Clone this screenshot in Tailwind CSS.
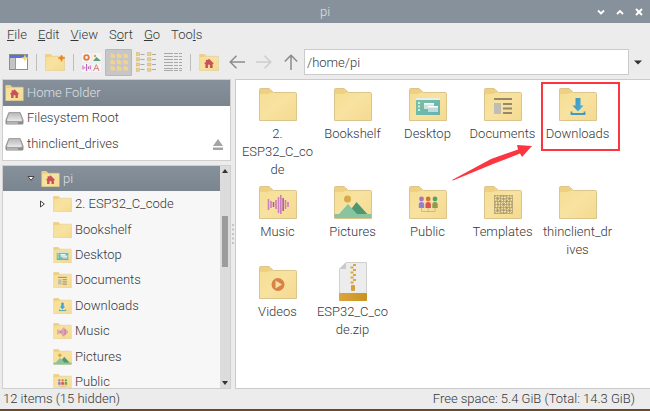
<!DOCTYPE html>
<html lang="en">
<head>
<meta charset="utf-8">
<title>pi</title>
<script src="https://cdn.jsdelivr.net/npm/@tailwindcss/browser@4"></script>
</head>
<body class="flex h-screen flex-col overflow-hidden border-b-2 border-[#6b4a2c] bg-[#ececec] text-[13px] leading-[18px] font-light text-[#35383a]" style="font-family: Roboto, 'Liberation Sans', sans-serif">

<svg class="absolute size-0" aria-hidden="true">
  <defs>
    <linearGradient id="fold" x1="0" y1="0" x2="1" y2="1"><stop offset="0" stop-color="#f5dd92"/><stop offset=".5" stop-color="#f8e2a0"/><stop offset="1" stop-color="#f4da90"/></linearGradient>
    <linearGradient id="blue" x1="0" y1="0" x2="1" y2="1"><stop offset="0" stop-color="#3f97b8"/><stop offset="1" stop-color="#49b0e0"/></linearGradient>
    <linearGradient id="desk" x1="0" y1="0" x2="1" y2="1"><stop offset="0" stop-color="#7cc0a0"/><stop offset="1" stop-color="#62b3b4"/></linearGradient>
    <linearGradient id="zipb"><stop offset="0" stop-color="#dba53f"/><stop offset="1" stop-color="#c8931f"/></linearGradient>
    <linearGradient id="drv" x1="0" y1="0" x2="0" y2="1"><stop offset="0" stop-color="#b5b5b5"/><stop offset="1" stop-color="#ececec"/></linearGradient>
  </defs>
  <symbol id="folder" viewBox="0 0 38 33">
    <path d="M.5 32.500V1.500Q.5.500 1.500.500H10L14.500 4.500H36.500Q37.500 4.500 37.500 5.500V32.500Z" fill="url(#fold)" stroke="#dcc58c"/>
    <path d="M1 1H10L14 5H11L8.500 6H1Z" fill="#efd083"/>
  </symbol>
  <symbol id="home" viewBox="0 0 38 33"><use href="#folder"/><path d="M19 9L28 18V19H26V27H21V21H17V27H12V19H10V18L13 15V11H16V12Z" fill="#cb5158"/></symbol>
  <symbol id="desktop" viewBox="0 0 38 33"><use href="#folder"/>
    <rect x="7" y="10" width="24" height="17" fill="url(#desk)"/><rect x="7" y="10" width="24" height="2" fill="#e9eeea"/>
    <path d="M9 14h2v2H9zM9 17.500h2v2H9zM9 21h2v2H9z" fill="#d7eee3"/>
    <rect x="15" y="15" width="10" height="6" fill="#cfe3df"/><rect x="15" y="15" width="10" height="1.500" fill="#fff"/>
    <rect x="19" y="18" width="10" height="6" fill="#c0dad8"/><rect x="19" y="18" width="10" height="1.500" fill="#fff"/>
  </symbol>
  <symbol id="documents" viewBox="0 0 38 33"><use href="#folder"/>
    <rect x="10" y="15" width="7" height="11" fill="#c0bdb6"/>
    <path d="M10 11h18M19 16h9M19 20.500h9M19 25h9" stroke="#96876a" stroke-width="2"/>
  </symbol>
  <symbol id="downloads" viewBox="0 0 38 33"><use href="#folder"/>
    <path d="M16.500 10H21.500V17.500H24.500L19 23.500L13.500 17.500H16.500Z" fill="url(#blue)"/>
    <path d="M12.500 23.500V26H25.500V23.500" fill="none" stroke="#3f9cc0" stroke-width="1.800"/>
  </symbol>
  <symbol id="music" viewBox="0 0 38 33"><use href="#folder"/>
    <path d="M9.500 13v11M12 15v7M14.500 16v5M17 14v9M19.500 11v16M21.800 9v19M24.200 12v13M26.500 14v9M29 16v5" stroke="#c87fbb" stroke-width="1.600"/>
    <path d="M14.500 16v5M24.200 12v13" stroke="#b4559d" stroke-width="1.200"/>
  </symbol>
  <symbol id="pictures" viewBox="0 0 38 33"><use href="#folder"/>
    <circle cx="13.500" cy="13" r="3.500" fill="#d9a948"/>
    <path d="M12 30L22.500 16L36 31Z" fill="#4f9772"/><path d="M.5 28H5L14 18L23 28H37.500V32H.5Z" fill="#89c4a0"/>
  </symbol>
  <symbol id="public" viewBox="0 0 38 33"><use href="#folder"/>
    <path d="M12.500 22V25.500H26V22M19.200 22v3.500" fill="none" stroke="#cbb98a"/>
    <circle cx="12.500" cy="13" r="2.400" fill="#b070bd"/><path d="M9.800 22V18q0-2 2.700-2t2.700 2v4z" fill="#8f83cf"/>
    <circle cx="19.200" cy="13" r="2.400" fill="#d4752f"/><path d="M16.500 22V18q0-2 2.700-2t2.700 2v4z" fill="#d8544d"/>
    <circle cx="26" cy="13" r="2.400" fill="#55a177"/><path d="M23.300 22V18q0-2 2.700-2t2.700 2v4z" fill="#8f9b4a"/>
  </symbol>
  <symbol id="templates" viewBox="0 0 38 33"><use href="#folder"/>
    <g fill="none" stroke="#9a8d68" stroke-width=".6"><rect x="10.500" y="9.500" width="18" height="18"/>
    <circle cx="19.500" cy="18.500" r="8.500"/><circle cx="19.500" cy="18.500" r="5"/>
    <path d="M10.500 9.500l18 18M28.500 9.500l-18 18M10.500 12.500h18M10.500 15.500h18M10.500 18.500h18M10.500 21.500h18M10.500 24.500h18M13.500 9.500v18M16.500 9.500v18M19.500 9.500v18M22.500 9.500v18M25.500 9.500v18"/></g>
  </symbol>
  <symbol id="videos" viewBox="0 0 38 33"><use href="#folder"/><circle cx="19" cy="18.500" r="6.500" fill="#d98245"/><path d="M16.500 14.500V22.500L23 18.500Z" fill="#f8dfa5"/></symbol>
  <symbol id="zip" viewBox="0 0 28 39">
    <path d="M.5 38V7L7 .5H27.500V38Z" fill="#ececec" stroke="#d0d0d0"/><path d="M.5 7L7 .5V7Z" fill="#c9c9c9"/>
    <rect y="31" width="28" height="8" rx="1" fill="url(#zipb)"/>
    <path d="M14 3h3M11.500 5.500h3M14 8h3M11.500 10.500h3M14 13h3M11.500 15.500h3M14 18h3M11.500 20.500h3" stroke="#dca640" stroke-width="2"/>
    <rect x="12" y="23" width="4" height="6" rx="1" fill="#d6a037"/>
  </symbol>
  <symbol id="drive" viewBox="0 0 19 14">
    <path d="M3.500 1.500H15.500L18.500 9V12Q18.500 13.500 17 13.500H2Q.5 13.500 .5 12V9Z" fill="#8d8d8d"/>
    <path d="M4 1.500H15L17.500 9Q17.500 10.500 16 10.500H3Q1.500 10.500 1.500 9Z" fill="url(#drv)" stroke="#969696" stroke-width=".7"/>
    <path d="M2 12h11" stroke="#d8d8d8"/>
  </symbol>
</svg>

<header class="relative flex h-[23px] shrink-0 items-center justify-center bg-[#87919b] text-[#dfe3e6]">
  <h1>pi</h1>
  <div class="absolute right-[2px] flex">
    <button aria-label="Minimize" class="flex w-[19px] justify-center"><svg class="size-[8px]" viewBox="0 0 8 8"><path d="M1 2.500L4 5.500L7 2.500" fill="none" stroke="#fff" stroke-width="1.800"/></svg></button>
    <button aria-label="Maximize" class="flex w-[19px] justify-center"><svg class="size-[8px]" viewBox="0 0 8 8"><path d="M1 6L4 3L7 6" fill="none" stroke="#fff" stroke-width="1.800"/></svg></button>
    <button aria-label="Close" class="flex w-[19px] justify-center"><svg class="size-[8px]" viewBox="0 0 8 8"><path d="M1 1L7 7M7 1L1 7" fill="none" stroke="#fff" stroke-width="2"/></svg></button>
  </div>
</header>

<nav aria-label="Menu" class="flex h-[24px] shrink-0 items-center gap-[11px] pl-[7px]">
  <button><u>F</u>ile</button><button><u>E</u>dit</button><button><u>V</u>iew</button><button>S<u>o</u>rt</button><button><u>G</u>o</button><button>Too<u>l</u>s</button>
</nav>

<div role="toolbar" class="flex h-[32px] shrink-0 items-center pb-[2px] pl-[5px]">
  <button aria-label="New window" class="flex h-[27px] w-[27px] items-center justify-center">
    <svg class="h-[18px] w-[20px]" viewBox="0 0 20 18"><rect x=".5" y="1.500" width="18" height="15" fill="#fff" stroke="#8c8c8c"/><rect x="1" y="2" width="17" height="3" fill="#5673d8"/><rect x="1" y="5" width="5" height="11" fill="#c4c4c4"/><path d="M6.500 5v11" stroke="#999"/><path d="M16 1L17 4L20 5L17 6L16 9L15 6L12 5L15 4Z" fill="#f8d568"/></svg>
  </button>
  <span class="mx-[4px] h-[17px] w-[1px] bg-[#bdbdbd]"></span>
  <button aria-label="New folder" class="flex h-[27px] w-[28px] items-center justify-center">
    <svg class="h-[17px] w-[20px]" viewBox="0 0 20 17"><use href="#folder" width="20" height="17"/><path d="M16.500 1L17.500 3.200L20 4L17.500 4.800L16.500 7.500L15.500 4.800L13 4L15.500 3.200Z" fill="#ee7d1d" stroke="#ee7d1d" stroke-width=".6"/></svg>
  </button>
  <span class="mx-[4px] h-[17px] w-[1px] bg-[#bdbdbd]"></span>
  <button aria-label="Thumbnails" class="flex h-[27px] w-[27px] items-center justify-center">
    <svg class="size-[19px]" viewBox="0 0 19 19"><path d="M0 0h9v9H0zM10.500 0h8.500v9h-8.500zM0 10.500h9V19H0zM10.500 10.500H19V19h-8.500z" fill="#f7f4f4"/><circle cx="4.500" cy="4.500" r="2.300" fill="none" stroke="#de7c42" stroke-width="1.800"/><circle cx="13" cy="3" r="1.200" fill="#dca640"/><path d="M11 8l3.500-4L19 8z" fill="#55a07b"/><path d="M1 12.500v4M2.800 14v1.500M4.600 11v7M6.400 13.500v2.500M8.200 12.500v4" stroke="#b45cba"/><path d="M11.500 18L14.300 11.500L17 18M12.500 15.500h4" fill="none" stroke="#dd8585"/></svg>
  </button>
  <button aria-label="Icons" aria-pressed="true" class="flex h-[27px] w-[27px] items-center justify-center rounded-[1px] border border-[#b8b8b8] bg-[#c6c6c6]">
    <svg class="h-[18px] w-[18px]" viewBox="0 0 18 18"><path d="M.5 .5h2l1 1h1.500v3.500H.5zM7 .5h2l1 1h1.500v3.500H7zM13.500 .5h2l1 1h1.500v3.500h-4.500zM.5 6.800h2l1 1h1.500v3.500H.5zM7 6.800h2l1 1h1.500v3.500H7zM13.500 6.800h2l1 1h1.500v3.500h-4.500zM.5 13h2l1 1h1.500v3.500H.5zM7 13h2l1 1h1.500v3.500H7zM13.500 13h2l1 1h1.500v3.500h-4.500z" fill="#f0d48c"/></svg>
  </button>
  <button aria-label="Compact" class="flex h-[27px] w-[27px] items-center justify-center">
    <svg class="size-[20px]" viewBox="0 0 20 20"><path d="M0 0.500h3.500v3H0zM0 5.800h3.500v3H0zM0 11h3.500v3H0zM0 16.300h3.500v3H0zM11.500 0.500H15v3h-3.500zM11.500 5.800H15v3h-3.500zM11.500 11H15v3h-3.500zM11.500 16.300H15v3h-3.500z" fill="#ecd08a" stroke="#cdb06b" stroke-width=".5"/><path d="M4.500 2.500h4M4.500 7.500h4M4.500 12.500h4M4.500 17.500h4M16 2.500h4M16 7.500h4M16 12.500h4M16 17.500h4" stroke="#a9a9a9"/></svg>
  </button>
  <button aria-label="Detailed list" class="flex h-[27px] w-[27px] items-center justify-center">
    <svg class="h-[18px] w-[18px]" viewBox="0 0 18 18"><path d="M0 .5h18M0 3.500h18M0 6.500h18M0 9.500h18M0 12.500h18M0 15.500h18" stroke="#a8a8a8" stroke-dasharray="9 1 4 1 3 0"/><path d="M0 17.500h18" stroke="#a8a8a8" stroke-dasharray="9 1 4 1 3 0"/></svg>
  </button>
  <span class="mx-[4px] h-[17px] w-[1px] bg-[#bdbdbd]"></span>
  <button aria-label="Home" class="flex h-[27px] w-[28px] items-center justify-center"><svg class="h-[17px] w-[20px]"><use href="#home"/></svg></button>
  <button aria-label="Back" class="flex h-[27px] w-[27px] items-center justify-center"><svg class="h-[14px] w-[16px]" viewBox="0 0 16 14" fill="none" stroke="#8c8c8c" stroke-width="1.500"><path d="M7.500.8L1.200 7L7.500 13.200M1 7H16"/></svg></button>
  <button aria-label="Forward" class="flex h-[27px] w-[27px] items-center justify-center"><svg class="h-[14px] w-[16px]" viewBox="0 0 16 14" fill="none" stroke="#cdcdcd" stroke-width="1.500"><path d="M8.500.8L14.800 7L8.500 13.200M15 7H0"/></svg></button>
  <button aria-label="Up" class="flex h-[27px] w-[27px] items-center justify-center"><svg class="h-[16px] w-[14px]" viewBox="0 0 14 16" fill="none" stroke="#8c8c8c" stroke-width="1.500"><path d="M.8 7.500L7 1.200L13.200 7.500M7 1V16"/></svg></button>
  <input aria-label="Location" value="/home/pi" class="h-[26px] min-w-0 flex-1 border border-[#cbcbcb] bg-white pl-[2px] font-light outline-none">
  <button aria-label="Location history" class="flex h-[27px] w-[21px] items-center justify-center pr-[4px]"><svg class="h-[5px] w-[8px]" viewBox="0 0 8 5"><path d="M0 .5H8L4 4.500Z" fill="#333"/></svg></button>
</div>

<main class="flex min-h-0 flex-1 pl-[2px]">
  <aside class="flex w-[229px] shrink-0 flex-col gap-[4px]">
    <nav aria-label="Places" class="h-[82px] shrink-0 border border-[#cfcfcf] bg-white">
      <div class="grid h-[77px] auto-rows-fr">
        <a href="#home" class="flex items-center gap-[3px] bg-linear-to-b from-[#87919b] to-[#7b858f] pl-[2px] text-[#dde0e3]"><svg class="h-[16px] w-[19px]"><use href="#home"/></svg>Home Folder</a>
        <a href="#drive" class="flex items-center gap-[3px] pl-[2px]"><svg class="h-[14px] w-[19px]"><use href="#drive"/></svg>Filesystem Root</a>
        <a href="#drive" class="flex items-center gap-[3px] pl-[2px]"><svg class="h-[14px] w-[19px]"><use href="#drive"/></svg><span class="flex-1">thinclient_drives</span>
          <svg class="mr-[7px] h-[11px] w-[10px]" viewBox="0 0 10 11"><path d="M5 0L10 7H0ZM0 8.500H10V11H0Z" fill="#a4a4a4"/></svg></a>
      </div>
    </nav>
    <div class="flex min-h-0 flex-1 border border-[#cfcfcf] bg-[#f7f7f7]">
      <nav aria-label="Folders" class="min-w-0 flex-1 overflow-hidden leading-[14px]">
        <div class="grid h-[229px] auto-rows-fr">
          <a href="#home" class="flex items-center gap-[3px] bg-linear-to-b from-[#87919b] to-[#7b858f] pl-[24px] text-[#dde0e3]"><svg class="mr-[3px] h-[5px] w-[8px]" viewBox="0 0 8 5"><path d="M1 .5H7L4 4.300Z" fill="#fff" stroke="#444"/></svg><svg class="h-[16px] w-[19px]"><use href="#home"/></svg>pi</a>
          <a href="#folder" class="flex items-center gap-[3px] pl-[37px]"><svg class="mr-[5px] h-[8px] w-[5px]" viewBox="0 0 5 8"><path d="M.5 1V7L4.300 4Z" fill="#fff" stroke="#444"/></svg><svg class="h-[16px] w-[19px]"><use href="#folder"/></svg>2. ESP32_C_code</a>
          <a href="#folder" class="flex items-center gap-[3px] pl-[50px]"><svg class="h-[16px] w-[19px]"><use href="#folder"/></svg>Bookshelf</a>
          <a href="#desktop" class="flex items-center gap-[3px] pl-[50px]"><svg class="h-[16px] w-[19px]"><use href="#desktop"/></svg>Desktop</a>
          <a href="#documents" class="flex items-center gap-[3px] pl-[50px]"><svg class="h-[16px] w-[19px]"><use href="#documents"/></svg>Documents</a>
          <a href="#downloads" class="flex items-center gap-[3px] pl-[50px]"><svg class="h-[16px] w-[19px]"><use href="#downloads"/></svg>Downloads</a>
          <a href="#music" class="flex items-center gap-[3px] pl-[50px]"><svg class="h-[16px] w-[19px]"><use href="#music"/></svg>Music</a>
          <a href="#pictures" class="flex items-center gap-[3px] pl-[50px]"><svg class="h-[16px] w-[19px]"><use href="#pictures"/></svg>Pictures</a>
          <a href="#public" class="flex items-center gap-[3px] pl-[50px]"><svg class="h-[16px] w-[19px]"><use href="#public"/></svg>Public</a>
        </div>
      </nav>
      <div class="flex w-[10px] flex-col items-center bg-[#dcdcdc] py-[3px]">
        <svg class="h-[4px] w-[6px]" viewBox="0 0 6 4"><path d="M0 4L3 0L6 4Z" fill="#333"/></svg>
        <span class="mt-[43px] h-[51px] w-[6px] bg-[#9c9c9c]"></span>
        <svg class="mt-auto h-[4px] w-[6px]" viewBox="0 0 6 4"><path d="M0 0H6L3 4Z" fill="#333"/></svg>
      </div>
    </div>
  </aside>

  <div class="flex w-[4px] shrink-0 items-center justify-center"><svg class="h-[20px] w-[2px]" viewBox="0 0 2 20"><path d="M0 0h2v2H0zM0 4.500h2v2H0zM0 9h2v2H0zM0 13.500h2v2H0zM0 18h2v2H0z" fill="#c4c4c4"/></svg></div>

  <section aria-label="Files" class="relative min-w-0 flex-1 border-y border-l border-[#cbcbcb] bg-white">
    <ul class="flex flex-wrap gap-y-[3px] pt-[4px] pl-[4px] text-center">
      <li class="w-[75px]"><div class="flex h-[41px] justify-center pt-[4px]"><svg class="h-[33px] w-[38px]"><use href="#folder"/></svg></div>2.<br>ESP32_C_co<br>de</li>
      <li class="w-[75px]"><div class="flex h-[41px] justify-center pt-[4px]"><svg class="h-[33px] w-[38px]"><use href="#folder"/></svg></div>Bookshelf</li>
      <li class="w-[75px]"><div class="flex h-[41px] justify-center pt-[4px]"><svg class="h-[33px] w-[38px]"><use href="#desktop"/></svg></div>Desktop</li>
      <li class="w-[75px]"><div class="flex h-[41px] justify-center pt-[4px]"><svg class="h-[33px] w-[38px]"><use href="#documents"/></svg></div>Documents</li>
      <li class="w-[75px]"><div class="flex h-[41px] justify-center pt-[4px]"><svg class="h-[33px] w-[38px]"><use href="#downloads"/></svg></div>Downloads</li>
      <li class="w-[75px]"><div class="flex h-[41px] justify-center pt-[4px]"><svg class="h-[33px] w-[38px]"><use href="#music"/></svg></div>Music</li>
      <li class="w-[75px]"><div class="flex h-[41px] justify-center pt-[4px]"><svg class="h-[33px] w-[38px]"><use href="#pictures"/></svg></div>Pictures</li>
      <li class="w-[75px]"><div class="flex h-[41px] justify-center pt-[4px]"><svg class="h-[33px] w-[38px]"><use href="#public"/></svg></div>Public</li>
      <li class="w-[75px]"><div class="flex h-[41px] justify-center pt-[4px]"><svg class="h-[33px] w-[38px]"><use href="#templates"/></svg></div>Templates</li>
      <li class="w-[75px]"><div class="flex h-[41px] justify-center pt-[4px]"><svg class="h-[33px] w-[38px]"><use href="#folder"/></svg></div>thinclient_dr<br>ives</li>
      <li class="w-[75px]"><div class="flex h-[41px] justify-center pt-[4px]"><svg class="h-[33px] w-[38px]"><use href="#videos"/></svg></div>Videos</li>
      <li class="w-[75px]"><div class="flex h-[41px] justify-center"><svg class="h-[39px] w-[28px]"><use href="#zip"/></svg></div>ESP32_C_co<br>de.zip</li>
    </ul>
    <div class="absolute top-[2px] left-[305px] h-[69px] w-[79px] border-2 border-[#fb3640]"></div>
    <svg class="absolute top-[64px] left-[215px] h-[38px] w-[84px]" viewBox="0 0 84 38"><path d="M1 36L40 15L67 5.500L66 1L81 2L71 13L69 9.500L42 20L2 36.500Z" fill="#fb3640"/></svg>
  </section>
</main>

<footer class="flex h-[20px] shrink-0 items-center justify-between pr-[15px] pl-[3px]">
  <span>12 items (15 hidden)</span><span>Free space: 5.4 GiB (Total: 14.3 GiB)</span>
</footer>
</body>
</html>
